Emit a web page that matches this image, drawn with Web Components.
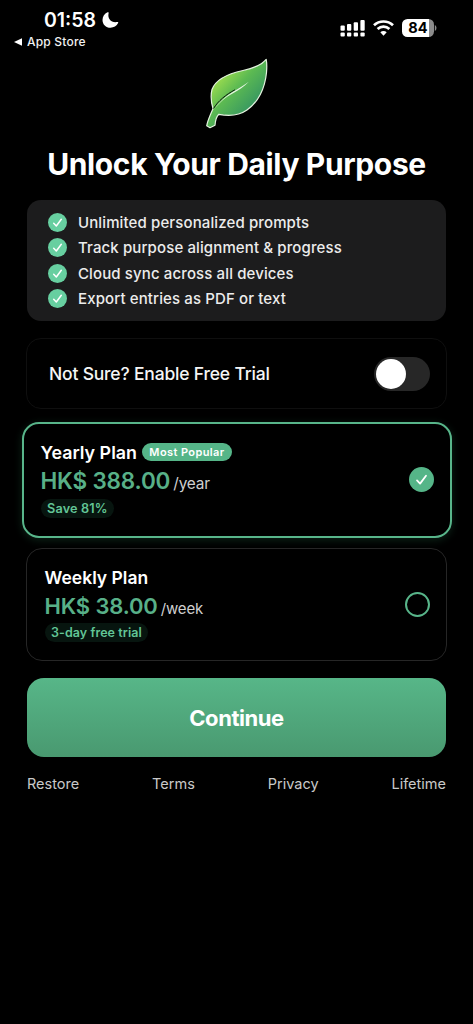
<!DOCTYPE html>
<html lang="en">
<head>
<meta charset="utf-8">
<title>Unlock Your Daily Purpose</title>
<style>
html,body{margin:0;background:#000;color:#fff;font-family:Inter,"Liberation Sans",sans-serif}
</style>
</head>
<body>
<paywall-screen></paywall-screen>
<script>
const define = (name, html) => {
  const t = document.createElement('template');
  t.innerHTML = html;
  customElements.define(name, class extends HTMLElement {
    constructor() {
      super();
      this.attachShadow({mode: 'open'}).appendChild(t.content.cloneNode(true));
    }
  });
};

define('status-bar', `
<style>
:host{display:flex;justify-content:space-between;height:56px;box-sizing:border-box;padding:10px 36px 0 14px}
.clock{display:flex;align-items:center;gap:6px;height:20px;padding-left:30px;font-size:19.5px;font-weight:600;letter-spacing:0}
.back{display:flex;align-items:center;gap:5px;margin-top:4px;height:15px;font-size:12px;font-weight:500;letter-spacing:.2px;color:#f2f2f2}
.right{display:flex;align-items:center;height:18px;margin-top:9px}
.bat{display:flex;align-items:center;margin-left:8px}
.cell{width:32px;height:18px;border-radius:5.5px;background:linear-gradient(90deg,#fff 84%,#8b8b8b 84%);color:#000;font-weight:700;font-size:14.5px;line-height:18px;text-align:center;letter-spacing:.1px}
svg{display:block}
</style>
<div>
  <div class="clock"><span>01:58</span><svg width="17" height="16" viewBox="0 0 17 16"><path d="M5.500.3C6.300 0 6.900.4 6.600 1.200C5.300 6.800 9.300 11 15.200 10C16.100 9.800 16.500 10.300 16.100 11.100C14.700 14 11.800 15.800 8.500 15.800C3.900 15.800.5 12.400.5 8C.5 4.500 2.500 1.500 5.500.3Z" fill="#fff"/></svg></div>
  <div class="back"><svg width="8" height="8" viewBox="0 0 8 8"><path d="M0 4 8 .3V7.7Z" fill="#fff"/></svg><span>App Store</span></div>
</div>
<div class="right">
  <svg width="25" height="17" viewBox="0 0 25 17" fill="#fff"><rect x="0.500" y="5.5" width="4.3" height="5.2" rx="1"/><rect x="7" y="4" width="4.3" height="6.7" rx="1"/><rect x="13.700" y="2.3" width="4.3" height="8.4" rx="1"/><rect x="20.400" y="0" width="4.3" height="10.7" rx="1"/><rect x="0.500" y="12.4" width="4.3" height="4.2" rx="1"/><rect x="7" y="12.4" width="4.3" height="4.2" rx="1"/><rect x="13.700" y="12.4" width="4.3" height="4.2" rx="1"/><rect x="20.400" y="12.4" width="4.3" height="4.2" rx="1"/></svg>
  <svg style="margin-left:8px" width="21" height="16" viewBox="0 0 21 16" fill="none" stroke="#fff" stroke-width="2.7"><path d="M1 5.3C6.3.2 14.7.2 20 5.3"/><path d="M4.6 9C8 5.8 13 5.8 16.4 9"/><path d="M10.5 15.7 7.3 12.3C9.1 10.6 11.9 10.6 13.7 12.3Z" fill="#fff" stroke="none"/></svg>
  <div class="bat"><div class="cell">84</div><svg width="3" height="6" viewBox="0 0 3 6"><path d="M.8 0C3 1 3 5 .8 6Z" fill="#8b8b8b"/></svg></div>
</div>`);

define('leaf-logo', `
<style>:host{display:block}svg{display:block;margin:0 auto;padding-right:2px}</style>
<svg width="66" height="74" viewBox="203 56.500 66 74">
  <defs><linearGradient id="g" x1="216" y1="76" x2="250" y2="108" gradientUnits="userSpaceOnUse"><stop offset="0" stop-color="#a6e24e"/><stop offset=".5" stop-color="#5cba52"/><stop offset="1" stop-color="#3a9a60"/></linearGradient></defs>
  <path d="M266.2 59.8C261 66 254 68.500 243 71C229 74 216 79 212 90C210.500 96 211.200 103 213 109.200C211 114 207.600 121 206.700 126.300L210 128.200L215 125.800C215.300 121.500 216 117.500 218.800 114.800C226 116.200 238 116.800 247 110.500C258 103 265 89 266.500 73C267 67 266.800 63 266.200 59.800Z" fill="url(#g)" stroke="#e4f3df" stroke-width="1.200" stroke-linejoin="round"/>
  <path d="M213.500 109C218 101.500 226 95 235 90.300" fill="none" stroke="#06150b" stroke-width="1"/>
  <path d="M213.700 110.500C219 102.500 226 96.500 233 92.300C239 88.800 244 85.500 248.800 82.200C244 87 238.500 90.800 233.500 93.500C225 98 219 103.300 213.700 110.500Z" fill="#e8f5e4"/>
</svg>`);

define('check-dot', `
<style>:host{display:block;width:var(--s,19px);height:var(--s,19px);border-radius:50%;background:var(--c,#67cfa0)}svg{display:block;width:100%;height:100%;transform:scale(var(--k,1))}</style>
<svg viewBox="0 0 19 19"><path d="M5.700 10.200 8.300 13 13.300 6.300" fill="none" stroke="#fff" stroke-width="1.500" stroke-linecap="round" stroke-linejoin="round"/></svg>`);

define('feature-item', `
<style>:host{display:flex;align-items:center;gap:11px;height:25.5px;font-size:15px;font-weight:500;letter-spacing:.12px;color:#ececec;white-space:nowrap}</style>
<check-dot></check-dot><span><slot></slot></span>`);

define('feature-list', `
<style>:host{display:block;box-sizing:border-box;height:121px;margin:0 27px 0 26.500px;padding:9.500px 21.500px;border-radius:14px;background:#1c1c1d}</style>
<slot></slot>`);

define('trial-toggle', `
<style>
:host{display:flex;align-items:center;justify-content:space-between;box-sizing:border-box;height:71px;margin:17px 26px 0;padding:0 16px 0 22px;border:1px solid #0f0f0f;border-radius:15px;font-size:17.500px;font-weight:500;color:#f5f5f5;letter-spacing:-.19px}
.track{box-sizing:border-box;width:56px;height:34px;padding:2px;border-radius:17px;background:#272727}
.knob{width:30px;height:30px;border-radius:50%;background:#fff}
</style>
<span><slot></slot></span><div class="track"><div class="knob"></div></div>`);

define('plan-card', `
<style>
:host{display:flex;align-items:center;justify-content:space-between;box-sizing:border-box;height:113px;margin:10px 26px 0;padding:0 16px 0 17.500px;border:1px solid #262626;border-radius:16px}
:host([selected]){height:116px;margin:12.500px 21px 0 21.500px;padding:0 16px 0 17px;border:2px solid #58b58a;border-radius:17px;box-shadow:0 2px 9px rgba(60,180,120,.2)}
.name{display:flex;align-items:center;gap:5px;height:21px;font-size:17.500px;font-weight:600}
.price{display:flex;align-items:baseline;gap:3px;height:34px;line-height:36px;font-size:22px;font-weight:600;color:#58b088;letter-spacing:-.15px}
.per{font-size:15px;font-weight:400;color:#cfcfcf;letter-spacing:-.15px}
.note{display:inline-block;height:19px;line-height:19px;padding:0 6.500px;margin-top:1px;border-radius:9.500px;background:#07150f;color:#62c596;font-size:12.500px;font-weight:600;letter-spacing:.07px}
:host([selected]) .name{font-size:17.850px}
:host([selected]) .price{font-size:22.500px;height:35px;letter-spacing:-.18px}
:host([selected]) .per{font-size:15.400px}
:host([selected]) .note{font-size:12.700px;letter-spacing:.16px}
.text{white-space:nowrap;display:flex;flex-direction:column;align-items:flex-start}
.ring{display:block;box-sizing:border-box;width:25px;height:25px;border:2px solid #58b58a;border-radius:50%}
check-dot{display:none;--s:25px;--c:#55b588;--k:.9}
:host([selected]) check-dot{display:block}
:host([selected]) .ring{display:none}
</style>
<div class="text">
  <div class="name"><slot name="name"></slot><slot name="badge"></slot></div>
  <div class="price"><slot name="price"></slot><span class="per"><slot name="per"></slot></span></div>
  <div class="note"><slot name="note"></slot></div>
</div>
<check-dot></check-dot><div class="ring"></div>`);

define('pill-badge', `
<style>:host{display:block;box-sizing:border-box;height:18px;width:90px;line-height:18px;border-radius:9px;background:#55b588;font-size:11px;font-weight:600;text-align:center;letter-spacing:.4px}</style>
<slot></slot>`);

define('cta-button', `
<style>:host{display:block;margin:17.500px 27px 0;height:79px}
button{all:unset;display:block;width:100%;height:79px;border-radius:17px;background:linear-gradient(#57b688,#499970);text-align:center;font:700 22px/80px Inter,sans-serif;color:#fff;letter-spacing:-.45px}</style>
<button><slot></slot></button>`);

define('footer-links', `
<style>:host{display:flex;justify-content:space-between;margin:17px 27px 0;height:20px;line-height:20px;font-size:14.500px;color:#c9c9c9}</style>
<slot></slot>`);

define('paywall-screen', `
<style>
:host{display:block;height:1024px;overflow:hidden;background:#000}
h1{margin:11px 0 14px;height:45px;line-height:46px;font-size:30px;font-weight:700;text-align:center;white-space:nowrap;letter-spacing:-.36px}
</style>
<status-bar></status-bar>
<leaf-logo></leaf-logo>
<h1>Unlock Your Daily Purpose</h1>
<feature-list>
  <feature-item>Unlimited personalized prompts</feature-item>
  <feature-item>Track purpose alignment &amp; progress</feature-item>
  <feature-item>Cloud sync across all devices</feature-item>
  <feature-item>Export entries as PDF or text</feature-item>
</feature-list>
<trial-toggle>Not Sure? Enable Free Trial</trial-toggle>
<plan-card selected>
  <span slot="name">Yearly Plan</span><pill-badge slot="badge">Most Popular</pill-badge>
  <span slot="price">HK$ 388.00</span><span slot="per">/year</span><span slot="note">Save 81%</span>
</plan-card>
<plan-card>
  <span slot="name">Weekly Plan</span>
  <span slot="price">HK$ 38.00</span><span slot="per">/week</span><span slot="note">3-day free trial</span>
</plan-card>
<cta-button>Continue</cta-button>
<footer-links><span>Restore</span><span>Terms</span><span>Privacy</span><span>Lifetime</span></footer-links>`);
</script>
</body>
</html>
